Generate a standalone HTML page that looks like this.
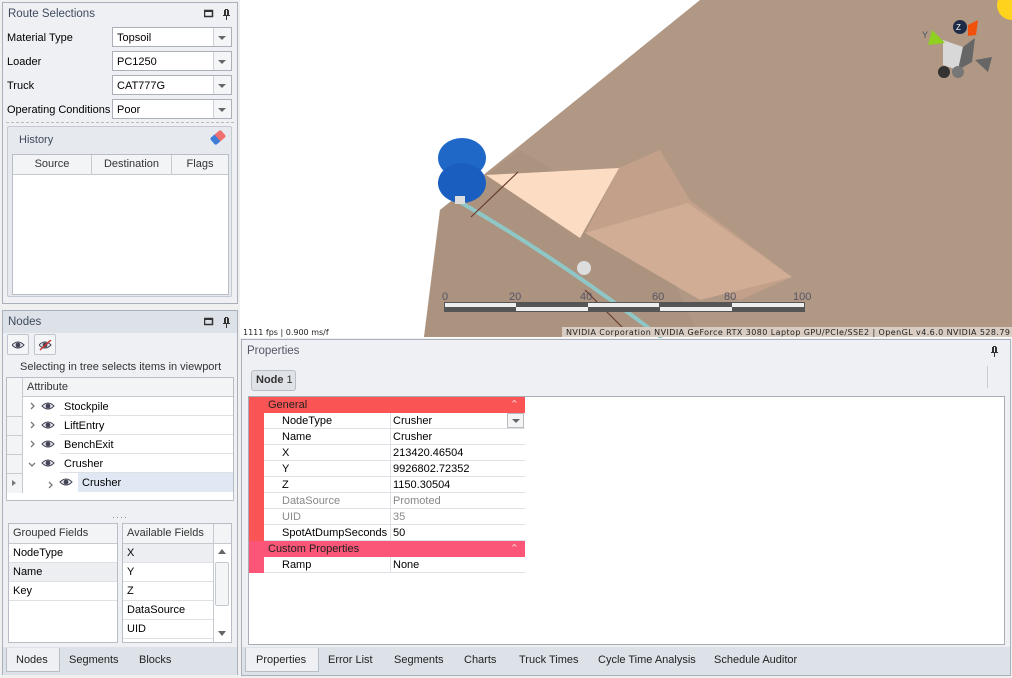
<!DOCTYPE html>
<html><head><style>
*{box-sizing:border-box;margin:0;padding:0}
body{width:1012px;height:678px;background:#f0f0f0;font-family:"Liberation Sans",sans-serif;font-size:11px;color:#000;position:relative;overflow:hidden}
.abs{position:absolute}
.panel{position:absolute;border:1px solid #aab0bb;background:#eef0f4}
.hdr{height:22px;line-height:22px;padding-left:5px;color:#3e4a5c;font-size:11.5px}
.lbl{position:absolute;left:7px}
.combo{position:absolute;left:112px;width:120px;height:20px;border:1px solid #abb0b8;background:#fff;padding-left:4px;line-height:20px}
.combo:after{content:"";position:absolute;right:0;top:0;width:17px;height:18px;border-left:1px solid #d0d4da;background:#f4f5f7}
.combo i{position:absolute;right:5px;top:8px;border-left:4px solid transparent;border-right:4px solid transparent;border-top:4px solid #666;z-index:2}
.row{position:absolute;height:16px;line-height:17px;border-bottom:1px solid #dde0e5}
.tab{position:absolute;line-height:22px;color:#222}
</style></head><body>

<svg width="0" height="0" style="position:absolute"><defs>
<g id="ctl"><rect x="0.5" y="1.5" width="8" height="6" fill="none" stroke="#333" stroke-width="1.5"/><rect x="0" y="1" width="9" height="2" fill="#333"/>
<path d="M21 0v1h-1v5h-1v1h3v4h1v-4h3v-1h-1v-5h-1v-1z M22 1h1v5h-1z" fill="#333"/></g>
<g id="eye"><path d="M0 5 Q6 -1 12 5 Q6 11 0 5z" fill="#e8ecf2" stroke="#445" stroke-width="1"/><circle cx="6" cy="5" r="2.4" fill="#445"/></g>
</defs></svg>

<!-- Route selections -->
<div class="panel" style="left:2px;top:2px;width:236px;height:302px">
 <div class="hdr">Route Selections</div>
 <svg style="position:absolute;left:201px;top:6px" width="28" height="12"><use href="#ctl"/></svg>
</div>
<div class="lbl abs" style="top:32px">Material Type</div>
<div class="combo" style="top:27px">Topsoil<i></i></div>
<div class="lbl abs" style="top:56px">Loader</div>
<div class="combo" style="top:51px">PC1250<i></i></div>
<div class="lbl abs" style="top:80px">Truck</div>
<div class="combo" style="top:75px">CAT777G<i></i></div>
<div class="lbl abs" style="top:104px">Operating Conditions</div>
<div class="combo" style="top:99px">Poor<i></i></div>
<div class="abs" style="left:6px;top:122px;width:228px;border-top:1px dashed #bbb"></div>
<div class="abs" style="left:7px;top:126px;width:225px;height:171px;border:1px solid #c5c9d0;background:#e6e9ee;border-radius:2px">
 <div style="position:absolute;left:11px;top:7px;color:#3e4a5c">History</div>
 <div style="position:absolute;right:6px;top:6px;width:14px;height:9px;background:linear-gradient(90deg,#3f7ed8 45%,#f07070 45%);transform:rotate(-40deg);border-radius:2px"></div>
 <div style="position:absolute;left:4px;top:27px;width:217px;height:141px;background:#fff;border:1px solid #b9bec6">
  <div style="height:20px;border-bottom:1px solid #c5c9d0;background:#f3f4f6;display:flex;line-height:19px;text-align:center;color:#333">
   <div style="width:79px;border-right:1px solid #c5c9d0">Source</div>
   <div style="width:80px;border-right:1px solid #c5c9d0">Destination</div>
   <div style="flex:1">Flags</div>
  </div>
 </div>
</div>

<!-- Nodes -->
<div class="panel" style="left:2px;top:310px;width:236px;height:365px">
 <div class="hdr" style="background:#dde1e8">Nodes</div>
 <svg style="position:absolute;left:201px;top:6px" width="28" height="12"><use href="#ctl"/></svg>
</div>
<div class="abs" style="left:7px;top:334px;width:22px;height:21px;border:1px solid #c0c4cc;border-radius:2px;background:#f4f5f7"><svg style="position:absolute;left:4px;top:5px" width="13" height="11"><use href="#eye"/></svg></div>
<div class="abs" style="left:34px;top:334px;width:22px;height:21px;border:1px solid #c0c4cc;border-radius:2px;background:#f4f5f7"><svg style="position:absolute;left:4px;top:5px" width="13" height="11"><use href="#eye"/><line x1="1" y1="10" x2="12" y2="0" stroke="#c33" stroke-width="1.5"/></svg></div>
<div class="abs" style="left:20px;top:361px;color:#333">Selecting in tree selects items in viewport</div>
<div class="abs" style="left:6px;top:377px;width:228px;height:124px;background:#fff;border:1px solid #b9bec6">
 <div style="position:absolute;left:0;top:0;width:16px;height:115px;border-right:1px solid #c5c9d0;background:#f3f4f6"></div>
 <div style="position:absolute;left:16px;top:0;right:0;height:19px;border-bottom:1px solid #c5c9d0;background:#f3f4f6;line-height:18px;padding-left:4px;color:#333">Attribute</div>
 <div style="position:absolute;left:0;top:38px;width:16px;border-bottom:1px solid #ccc"></div>
 <div style="position:absolute;left:0;top:57px;width:16px;border-bottom:1px solid #ccc"></div>
 <div style="position:absolute;left:0;top:76px;width:16px;border-bottom:1px solid #ccc"></div>
 <div style="position:absolute;left:0;top:95px;width:16px;border-bottom:1px solid #ccc"></div>
 <div style="position:absolute;left:5px;top:102px;border-top:3px solid transparent;border-bottom:3px solid transparent;border-left:4px solid #777"></div>
 <div style="position:absolute;left:53px;top:19px;right:0;height:19px;border-bottom:1px solid #dde0e5;line-height:20px;padding-left:4px">Stockpile</div>
 <div style="position:absolute;left:53px;top:38px;right:0;height:19px;border-bottom:1px solid #dde0e5;line-height:20px;padding-left:4px">LiftEntry</div>
 <div style="position:absolute;left:53px;top:57px;right:0;height:19px;border-bottom:1px solid #dde0e5;line-height:20px;padding-left:4px">BenchExit</div>
 <div style="position:absolute;left:53px;top:76px;right:0;height:19px;border-bottom:1px solid #dde0e5;line-height:20px;padding-left:4px">Crusher</div>
 <div style="position:absolute;left:71px;top:95px;right:0;height:19px;background:#dfe8f3;line-height:20px;padding-left:4px">Crusher</div>
 <svg style="position:absolute;left:18px;top:19px" width="70" height="95">
  <path d="M6 6l3 3-3 3M6 25l3 3-3 3M6 44l3 3-3 3M4 66l3 3 3-3M24 85l3 3-3 3" fill="none" stroke="#777" stroke-width="1.3"/>
  <use href="#eye" x="17" y="4"/><use href="#eye" x="17" y="23"/><use href="#eye" x="17" y="42"/><use href="#eye" x="17" y="61"/><use href="#eye" x="35" y="80"/>
 </svg>
</div>
<div class="abs" style="left:112px;top:512px;color:#888;font-size:9px;letter-spacing:1px">····</div>
<div class="abs" style="left:8px;top:523px;width:110px;height:120px;background:#fff;border:1px solid #b9bec6">
 <div style="height:20px;line-height:19px;padding-left:4px;background:#f3f4f6;border-bottom:1px solid #c5c9d0;color:#333">Grouped Fields</div>
 <div style="height:19px;line-height:19px;padding-left:4px;border-bottom:1px solid #dde0e5">NodeType</div>
 <div style="height:19px;line-height:19px;padding-left:4px;border-bottom:1px solid #dde0e5;background:#eceef1">Name</div>
 <div style="height:19px;line-height:19px;padding-left:4px;border-bottom:1px solid #dde0e5">Key</div>
</div>
<div class="abs" style="left:122px;top:523px;width:110px;height:120px;background:#fff;border:1px solid #b9bec6">
 <div style="height:20px;line-height:19px;padding-left:4px;background:#f3f4f6;border-bottom:1px solid #c5c9d0;color:#333">Available Fields</div>
 <div style="height:19px;line-height:19px;padding-left:4px;border-bottom:1px solid #dde0e5;background:#eceef1;width:90px">X</div>
 <div style="height:19px;line-height:19px;padding-left:4px;border-bottom:1px solid #dde0e5;width:90px">Y</div>
 <div style="height:19px;line-height:19px;padding-left:4px;border-bottom:1px solid #dde0e5;width:90px">Z</div>
 <div style="height:19px;line-height:19px;padding-left:4px;border-bottom:1px solid #dde0e5;width:90px">DataSource</div>
 <div style="height:19px;line-height:19px;padding-left:4px;border-bottom:1px solid #dde0e5;width:90px">UID</div>
 <div style="position:absolute;left:90px;top:0;width:1px;height:118px;background:#c5c9d0"></div>
 <div style="position:absolute;left:92px;top:38px;width:14px;height:44px;border:1px solid #c5c9d0;border-radius:2px;background:#f4f5f7"></div>
 <div style="position:absolute;left:95px;top:25px;border-left:4px solid transparent;border-right:4px solid transparent;border-bottom:5px solid #666"></div>
 <div style="position:absolute;left:95px;top:107px;border-left:4px solid transparent;border-right:4px solid transparent;border-top:5px solid #666"></div>
</div>
<div class="abs" style="left:3px;top:647px;width:234px;height:28px;background:#dde1e8"></div>
<div class="abs" style="left:6px;top:648px;width:54px;height:24px;background:#eef0f4;border:1px solid #b9bec6;border-top:none"></div>
<div class="tab" style="left:16px;top:649px">Nodes</div>
<div class="tab" style="left:69px;top:649px">Segments</div>
<div class="tab" style="left:139px;top:649px">Blocks</div>

<!-- Viewport -->
<svg class="abs" style="left:240px;top:0" width="772" height="338" viewBox="240 0 772 338">
 <rect x="240" y="0" width="772" height="338" fill="#fff"/>
 <polygon points="700,0 1012,0 1012,337 424,337 440,210" fill="#b09885"/>
 <polygon points="440,210 520,150 650,230 700,337 424,337" fill="#a88f7c" opacity=".6"/>
 <polygon points="619,168 660,150 690,200 792,277 740,300 585,233" fill="#c3a089"/>
 <polygon points="585,233 688,203 792,277 700,300" fill="#d0ad94"/>
 <polygon points="486,175 619,168 580,238" fill="#fcdcc3"/>
 <path d="M460 202 Q560 260 662 338" fill="none" stroke="#8fc7c7" stroke-width="4"/>
 <line x1="471" y1="217" x2="518" y2="172" stroke="#6b3c30" stroke-width="1.2"/>
 <line x1="585" y1="290" x2="625" y2="330" stroke="#6b3c30" stroke-width="1.2"/>
 <ellipse cx="462" cy="158" rx="24" ry="20" fill="#1f68c8"/>
 <ellipse cx="462" cy="183" rx="24" ry="20" fill="#1a5fc0"/>
 <rect x="455" y="196" width="10" height="8" fill="#ddd"/>
 <circle cx="584" cy="268" r="7" fill="#ddd"/>
 <text x="442" y="300" font-size="11" fill="#556" font-family="Liberation Sans">0</text>
 <text x="509" y="300" font-size="11" fill="#556" font-family="Liberation Sans">20</text>
 <text x="580" y="300" font-size="11" fill="#556" font-family="Liberation Sans">40</text>
 <text x="652" y="300" font-size="11" fill="#556" font-family="Liberation Sans">60</text>
 <text x="724" y="300" font-size="11" fill="#556" font-family="Liberation Sans">80</text>
 <text x="793" y="300" font-size="11" fill="#556" font-family="Liberation Sans">100</text>
 <rect x="444" y="302" width="361" height="10" fill="#555"/>
 <rect x="445" y="303" width="71" height="4" fill="#eee"/><rect x="588" y="303" width="71" height="4" fill="#eee"/><rect x="732" y="303" width="72" height="4" fill="#eee"/>
 <rect x="516" y="307" width="72" height="4" fill="#eee"/><rect x="660" y="307" width="72" height="4" fill="#eee"/>
 <circle cx="1012" cy="5" r="15" fill="#ffd21e"/>
 <polygon points="943,40 963,47 958,70 943,65" fill="#d8d8d8"/>
 <polygon points="963,47 975,38 972,62 958,70" fill="#666"/>
 <polygon points="928,45 945,43 932,30" fill="#8fd020"/>
 <circle cx="960" cy="27" r="7" fill="#1d2b46"/>
 <polygon points="968,25 978,20 976,35 968,36" fill="#f0500a"/>
 <ellipse cx="944" cy="72" rx="6" ry="6" fill="#333"/><ellipse cx="958" cy="72" rx="6" ry="6" fill="#777"/>
 <polygon points="975,60 992,57 988,72" fill="#666"/>
 <text x="922" y="38" font-size="9" fill="#456" font-family="Liberation Sans">Y</text>
 <text x="956" y="30" font-size="8" fill="#fff" font-family="Liberation Sans">Z</text>
 <rect x="562" y="327" width="450" height="10" fill="#d9ccc2"/>
 <text x="243" y="335" font-size="8" fill="#222" font-family="DejaVu Sans">1111 fps | 0.900 ms/f</text>
 <text x="566" y="335" font-size="8" fill="#222" font-family="DejaVu Sans" textLength="444">NVIDIA Corporation NVIDIA GeForce RTX 3080 Laptop GPU/PCIe/SSE2 | OpenGL v4.6.0 NVIDIA 528.79</text>
</svg>

<!-- Properties -->
<div class="panel" style="left:241px;top:339px;width:770px;height:337px">
 <div class="hdr" style="color:#556">Properties</div>
 <svg style="position:absolute;left:749px;top:6px" width="10" height="12"><path d="M2 0v1h-1v5h-1v1h3v4h1v-4h3v-1h-1v-5h-1v-1z M3 1h1v5h-1z" fill="#333"/></svg>
</div>
<div class="abs" style="left:251px;top:370px;width:45px;height:21px;border:1px solid #b9bec6;border-radius:3px;background:#dfe2e7;line-height:19px;padding-left:4px;color:#333"><b>Node</b> 1</div>
<div class="abs" style="left:987px;top:366px;width:1px;height:22px;background:#ccc"></div>
<div class="abs" style="left:248px;top:396px;width:757px;height:249px;background:#fff;border:1px solid #a9aeb6">
 <div style="position:absolute;left:0;top:0;width:276px;height:16px;background:#fa5454;line-height:17px;padding-left:19px;color:#222">General<span style="position:absolute;right:6px;color:#fcc">⌃</span></div>
 <div style="position:absolute;left:0;top:16px;width:15px;height:128px;background:#fa5454"></div>
 <div style="position:absolute;left:0;top:144px;width:276px;height:16px;background:#fb5577;line-height:17px;padding-left:19px;color:#222">Custom Properties<span style="position:absolute;right:6px;color:#fcc">⌃</span></div>
 <div style="position:absolute;left:0;top:160px;width:15px;height:16px;background:#fb5577"></div>
 <div style="position:absolute;left:15px;top:16px;width:261px;font-size:11px">
  <div class="row" style="top:0;width:261px"><span style="position:absolute;left:18px">NodeType</span><span style="position:absolute;left:129px">Crusher</span><span style="position:absolute;left:243px;top:0;width:17px;height:15px;border:1px solid #bbb;background:#f3f4f6"><i style="position:absolute;left:4px;top:5px;border-left:4px solid transparent;border-right:4px solid transparent;border-top:4px solid #666"></i></span></div>
  <div class="row" style="top:16px;width:261px"><span style="position:absolute;left:18px">Name</span><span style="position:absolute;left:129px">Crusher</span></div>
  <div class="row" style="top:32px;width:261px"><span style="position:absolute;left:18px">X</span><span style="position:absolute;left:129px">213420.46504</span></div>
  <div class="row" style="top:48px;width:261px"><span style="position:absolute;left:18px">Y</span><span style="position:absolute;left:129px">9926802.72352</span></div>
  <div class="row" style="top:64px;width:261px"><span style="position:absolute;left:18px">Z</span><span style="position:absolute;left:129px">1150.30504</span></div>
  <div class="row" style="top:80px;width:261px;color:#888"><span style="position:absolute;left:18px">DataSource</span><span style="position:absolute;left:129px">Promoted</span></div>
  <div class="row" style="top:96px;width:261px;color:#888"><span style="position:absolute;left:18px">UID</span><span style="position:absolute;left:129px">35</span></div>
  <div class="row" style="top:112px;width:261px"><span style="position:absolute;left:18px">SpotAtDumpSeconds</span><span style="position:absolute;left:129px">50</span></div>
  <div class="row" style="top:144px;width:261px"><span style="position:absolute;left:18px">Ramp</span><span style="position:absolute;left:129px">None</span></div>
  <div style="position:absolute;left:126px;top:0;width:1px;height:128px;background:#dde0e5"></div>
  <div style="position:absolute;left:126px;top:144px;width:1px;height:16px;background:#dde0e5"></div>
 </div>
</div>
<div class="abs" style="left:242px;top:647px;width:768px;height:28px;background:#dde1e8"></div>
<div class="abs" style="left:245px;top:648px;width:74px;height:24px;background:#eef0f4;border:1px solid #b9bec6;border-top:none"></div>
<div class="tab" style="left:256px;top:649px">Properties</div>
<div class="tab" style="left:328px;top:649px">Error List</div>
<div class="tab" style="left:394px;top:649px">Segments</div>
<div class="tab" style="left:464px;top:649px">Charts</div>
<div class="tab" style="left:519px;top:649px">Truck Times</div>
<div class="tab" style="left:598px;top:649px">Cycle Time Analysis</div>
<div class="tab" style="left:714px;top:649px">Schedule Auditor</div>
</body></html>
